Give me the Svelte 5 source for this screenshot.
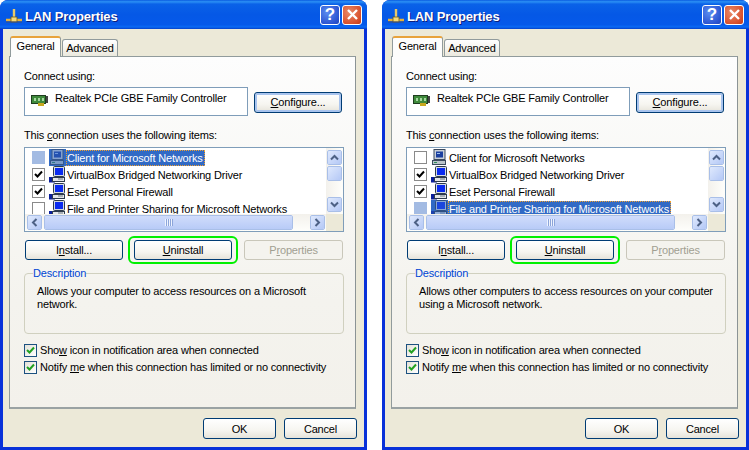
<script>
  const windows = [
    {
      selected: 0,
      description: 'Allows your computer to access resources on a Microsoft network.',
      items: [
        { name: 'Client for Microsoft Networks', checked: false, kind: 'client' },
        { name: 'VirtualBox Bridged Networking Driver', checked: true, kind: 'service' },
        { name: 'Eset Personal Firewall', checked: true, kind: 'service' },
        { name: 'File and Printer Sharing for Microsoft Networks', checked: false, kind: 'service' }
      ]
    },
    {
      selected: 3,
      description: 'Allows other computers to access resources on your computer using a Microsoft network.',
      items: [
        { name: 'Client for Microsoft Networks', checked: false, kind: 'client' },
        { name: 'VirtualBox Bridged Networking Driver', checked: true, kind: 'service' },
        { name: 'Eset Personal Firewall', checked: true, kind: 'service' },
        { name: 'File and Printer Sharing for Microsoft Networks', checked: false, kind: 'service' }
      ]
    }
  ];
</script>

{#snippet computer(kind)}
  <svg class="pc" width="17" height="17" viewBox="0 0 17 17">
    {#if kind === 'client'}
      <rect x="3" y="0.5" width="11" height="10" fill="#c9d0d8" stroke="#3b4a5e"/>
      <rect x="5" y="2.5" width="7" height="6" fill="#1a3f9f"/>
      <path d="M6 4h3v1H6z" fill="#9fc0f0"/>
      <rect x="1.5" y="11.5" width="13" height="4" fill="#b9c4c9" stroke="#3b4a5e"/>
      <path d="M3 13.5h3" stroke="#2e8b57"/>
    {:else}
      <rect x="0" y="11" width="6" height="5.5" fill="#0b1f9c"/>
      <rect x="4.5" y="0.5" width="11" height="10" rx="1" fill="#d4dae0" stroke="#2d3a4c"/>
      <rect x="6" y="2" width="8" height="7" fill="#0a2bf0"/>
      <rect x="3.5" y="11.5" width="12" height="4" fill="#e4e6e8" stroke="#2d3a4c"/>
      <path d="M9 13h5" stroke="#6f7a85"/>
    {/if}
  </svg>
{/snippet}

{#snippet arrow(d)}
  <svg width="9" height="7" viewBox="0 0 9 7"><path {d} fill="none" stroke="#4d6185" stroke-width="2"/></svg>
{/snippet}

{#snippet tick()}
  <svg width="9" height="9" viewBox="0 0 9 9"><path d="M1 4l2.5 2.5L8 1.5" fill="none" stroke="#21a121" stroke-width="2"/></svg>
{/snippet}

{#snippet dialog(win)}
  <section class="window">
    <header class="titlebar">
      <svg class="lan" width="18" height="18" viewBox="0 0 18 18">
        <path d="M9 2v10" stroke="#e8c96a" stroke-width="2.4"/>
        <path d="M1 13h16" stroke="#e8b23c" stroke-width="2.6"/>
        <rect x="6" y="10" width="6" height="5" fill="#f5d97a" stroke="#6d5a1e" stroke-width="0.8"/>
        <path d="M1 15h16" stroke="#3f4f7a"/>
      </svg>
      <h1>LAN Properties</h1>
      <button class="cap help" aria-label="Help">?</button>
      <button class="cap close" aria-label="Close">
        <svg width="13" height="13" viewBox="0 0 13 13"><path d="M2 2l9 9M11 2l-9 9" stroke="#fff" stroke-width="2.4"/></svg>
      </button>
    </header>

    <div class="body">
      <nav class="tabs">
        <span class="tab active">General</span>
        <span class="tab">Advanced</span>
      </nav>

      <div class="panel">
        <p class="connect">Connect using:</p>
        <div class="adapter-row">
          <div class="adapter">
            <svg width="17" height="13" viewBox="0 0 17 13">
              <rect x="0.5" y="1.5" width="14" height="8" fill="#3f8a3c" stroke="#1f3d1f"/>
              <path d="M3 4h2v3H3zM7 4h2v3H7zM11 4h2v3h-2z" fill="#a6d8a0"/>
              <rect x="7" y="9" width="6" height="3" fill="#c8a81e"/>
              <rect x="15" y="2" width="2" height="7" fill="#444"/>
            </svg>
            <span>Realtek PCIe GBE Family Controller</span>
          </div>
          <button class="btn default configure"><u>C</u>onfigure...</button>
        </div>

        <p class="uses">This <u>c</u>onnection uses the following items:</p>

        <div class="list">
          <div class="rows">
            {#each win.items as item, i}
              <div class="row">
                <span class="box" class:muted={i === win.selected}>
                  {#if item.checked}
                    <svg width="9" height="9" viewBox="0 0 9 9"><path d="M1 4l2.5 2.5L8 1.5" fill="none" stroke="#000" stroke-width="2"/></svg>
                  {/if}
                </span>
                <span class="icon" class:tinted={i === win.selected}>{@render computer(item.kind)}</span>
                <span class="label" class:selected={i === win.selected}>{item.name}</span>
              </div>
            {/each}
          </div>
          <div class="vscroll">
            <span class="sb">{@render arrow('M1 5.5l3.5-3.5 3.5 3.5')}</span>
            <span class="sb thumb"></span>
            <span class="spacer"></span>
            <span class="sb">{@render arrow('M1 1.5l3.5 3.5 3.5-3.5')}</span>
          </div>
          <div class="hscroll">
            <span class="sb">
              <svg width="7" height="9" viewBox="0 0 7 9"><path d="M5.5 1L2 4.5 5.5 8" fill="none" stroke="#4d6185" stroke-width="2"/></svg>
            </span>
            <span class="hthumb"><i class="grip"></i></span>
            <span class="spacer"></span>
            <span class="sb">
              <svg width="7" height="9" viewBox="0 0 7 9"><path d="M1.5 1L5 4.5 1.5 8" fill="none" stroke="#4d6185" stroke-width="2"/></svg>
            </span>
          </div>
          <div class="corner"></div>
        </div>

        <div class="actions">
          <button class="btn action">I<u>n</u>stall...</button>
          <button class="btn action ringed"><u>U</u>ninstall</button>
          <button class="btn action disabled">P<u>r</u>operties</button>
        </div>

        <fieldset class="group">
          <legend>Description</legend>
          <p>{win.description}</p>
        </fieldset>

        <div class="option first">
          <span class="box xp">{@render tick()}</span>
          <span>Sho<u>w</u> icon in notification area when connected</span>
        </div>
        <div class="option">
          <span class="box xp">{@render tick()}</span>
          <span>Notify <u>m</u>e when this connection has limited or no connectivity</span>
        </div>
      </div>

      <footer class="footer">
        <button class="btn foot">OK</button>
        <button class="btn foot">Cancel</button>
      </footer>
    </div>
  </section>
{/snippet}

<main class="stage">
  {#each windows as win}
    {@render dialog(win)}
  {/each}
</main>

<style>
  :global(body) { margin: 0; background: #fff; }
  .stage {
    width: 749px; height: 450px; display: flex; justify-content: space-between;
    font-family: "Liberation Sans", Arial, sans-serif; font-size: 11px; letter-spacing: -0.17px; color: #000; overflow: hidden;
  }
  .window {
    width: 367px; height: 450px; box-sizing: border-box; display: flex; flex-direction: column;
    background: #0831d9; border-radius: 8px 8px 0 0; overflow: hidden;
  }
  .titlebar {
    height: 29px; flex: none; display: flex; align-items: center; padding: 0 5px 0 5px; box-sizing: border-box;
    background: linear-gradient(180deg, #0a5be0 0%, #2b90f5 6%, #0a62e8 14%, #0558e6 50%, #0559ea 85%, #0a6af5 93%, #0540c8 100%);
  }
  .lan { flex: none; margin: 2px 2px 0 0; }
  h1 {
    margin: 4px 0 0; flex: 1; color: #fff; font-size: 13px; font-weight: 700; letter-spacing: -0.15px;
    text-shadow: 1px 1px 0 #0f1f7a;
  }
  .cap {
    width: 20px; height: 20px; padding: 0; box-sizing: border-box; border: 1px solid #fff; border-radius: 3px;
    display: flex; align-items: center; justify-content: center; color: #fff;
    font: 700 17px "Liberation Sans", sans-serif;
  }
  .help { background: radial-gradient(circle at 35% 35%, #5b8df0, #2a52d0 75%, #2248b8); margin-right: 2px; }
  .close { background: radial-gradient(circle at 35% 35%, #e88a68, #d9502c 70%, #c23a18); }

  .body {
    flex: 1; margin: 0 3px 3px; padding: 7px 0 0 6px; background: #ece9d8; min-height: 0;
  }
  .tabs { display: flex; height: 20px; align-items: flex-end; padding-left: 1px; }
  .tab {
    height: 17px; width: 56px; box-sizing: border-box; margin-left: 1px; text-align: center; line-height: 16px;
    border: 1px solid #919b9c; border-bottom: 0; border-radius: 3px 3px 0 0;
    background: linear-gradient(180deg, #fff, #ebe9de);
  }
  .tab.active {
    height: 21px; width: 51px; margin: 0 0 -1px 0; background: #fdfdfc; border-top: 2px solid #e8a33c;
    line-height: 17px; position: relative; z-index: 1;
  }
  .panel {
    width: 347px; height: 353px; box-sizing: border-box; border: 1px solid #919b9c; padding: 0 0 0 14px;
    border-right-color: #8b9395; border-bottom: 2px solid #9aa2a3;
    background: linear-gradient(180deg, #fdfdfd 0%, #f4f3ee 70%, #f3f1eb 100%);
    display: flex; flex-direction: column; align-items: flex-start;
  }
  p { margin: 0; }
  .connect { margin-top: 13px; line-height: 13px; }
  .adapter-row { display: flex; align-items: center; margin-top: 4px; }
  .adapter {
    width: 224px; height: 29px; box-sizing: border-box; border: 1px solid #7f9db9; background: #fff;
    display: flex; align-items: flex-start; padding: 4px 0 0 6px; gap: 7px;
  }
  .adapter svg { margin-top: 2px; }
  .adapter span { line-height: 13px; }
  .btn {
    box-sizing: border-box; padding: 0; border: 1px solid #003c74; border-radius: 3px; color: #000;
    font: inherit; letter-spacing: inherit; text-align: center;
    background: linear-gradient(180deg, #fff 0%, #f6f5f0 60%, #e6e3da 100%);
  }
  .configure { width: 88px; height: 21px; margin: 1px 0 0 6px; box-shadow: inset 0 0 0 2px #a9c4ee; }
  .uses { margin-top: 13px; line-height: 13px; }
  .list {
    margin-top: 5px; width: 320px; height: 85px; box-sizing: border-box; border: 1px solid #7f9db9; background: #fff;
    display: grid; grid-template-columns: 1fr 17px; grid-template-rows: 66px 17px;
  }
  .rows { overflow: hidden; padding-top: 1px; }
  .row { height: 17px; display: flex; align-items: center; padding-left: 7px; white-space: nowrap; }
  .box {
    width: 13px; height: 13px; box-sizing: border-box; border: 1px solid #8a8a8a; background: #fff; flex: none;
    display: flex; align-items: center; justify-content: center;
  }
  .box.muted { background: #a3bbe3; border-color: #a3bbe3; }
  .box.xp { border-color: #1c5180; background: linear-gradient(135deg, #e3e1d8, #fff); }
  .icon { flex: none; display: flex; width: 17px; height: 17px; margin-left: 4px; }
  .icon.tinted { background: #316ac5; }
  .icon.tinted .pc { opacity: 0.55; }
  .pc { flex: none; }
  .label { padding: 0 1px 0 0; height: 14px; line-height: 14px; border: 1px solid transparent; }
  .label.selected { background: #316ac5; color: #fff; border: 1px dotted #f0a030; }
  .vscroll {
    display: flex; flex-direction: column; align-items: center; padding: 2px 0 2px;
    background: linear-gradient(90deg, #f3f1ec, #fefefb);
  }
  .hscroll {
    display: flex; align-items: center; padding-left: 2px; padding-right: 1px;
    background: linear-gradient(180deg, #f3f1ec, #fefefb);
  }
  .sb {
    width: 15px; height: 15px; flex: none; box-sizing: border-box; border: 1px solid #fff; border-radius: 2px;
    background: linear-gradient(135deg, #dfe9fd, #b4c8f6); display: flex; align-items: center; justify-content: center;
    outline: 1px solid #a9bfe8; outline-offset: -1px;
  }
  .thumb { margin-top: 1px; }
  .spacer { flex: 1; }
  .hthumb {
    margin-left: 2px; width: 249px; height: 15px; box-sizing: border-box; border: 1px solid #fff; border-radius: 2px;
    background: linear-gradient(180deg, #d0dcfb, #b8cbf7); display: flex; align-items: center; justify-content: center;
    outline: 1px solid #a9bfe8; outline-offset: -1px;
  }
  .grip {
    width: 8px; height: 7px;
    background: repeating-linear-gradient(90deg, #eef3fe 0 1px, #8ca5da 1px 2px);
  }
  .corner { background: #ece9d8; }
  .actions { display: flex; gap: 11px; margin-top: 8px; margin-left: 1px; }
  .action { width: 98px; height: 20px; }
  .actions .action:last-child { width: 99px; margin-left: 1px; }
  .ringed { position: relative; }
  .ringed::after {
    content: ""; position: absolute; left: -7px; right: -7px; top: -5px; bottom: -5px;
    border: 2px solid #00f000; border-radius: 6px; pointer-events: none;
  }
  .disabled { border-color: #c9c7ba; background: #f4f3ee; color: #a19f92; }
  .group {
    margin: 7px 0 0; padding: 6px 0 0 12px; width: 320px; height: 67px; box-sizing: border-box;
    border: 1px solid #d0d0bf; border-radius: 4px; min-inline-size: 0;
  }
  .group legend { padding: 0; margin-left: -4px; color: #0046d5; line-height: 13px; }
  .group p { line-height: 13px; width: 300px; margin-top: -1px; }
  .option { display: flex; align-items: center; gap: 3px; height: 13px; line-height: 13px; }
  .option.first { margin-top: 10px; margin-bottom: 4px; }
  .footer { display: flex; gap: 8px; margin-top: 9px; margin-left: 194px; }
  .foot { width: 73px; height: 21px; }
</style>
